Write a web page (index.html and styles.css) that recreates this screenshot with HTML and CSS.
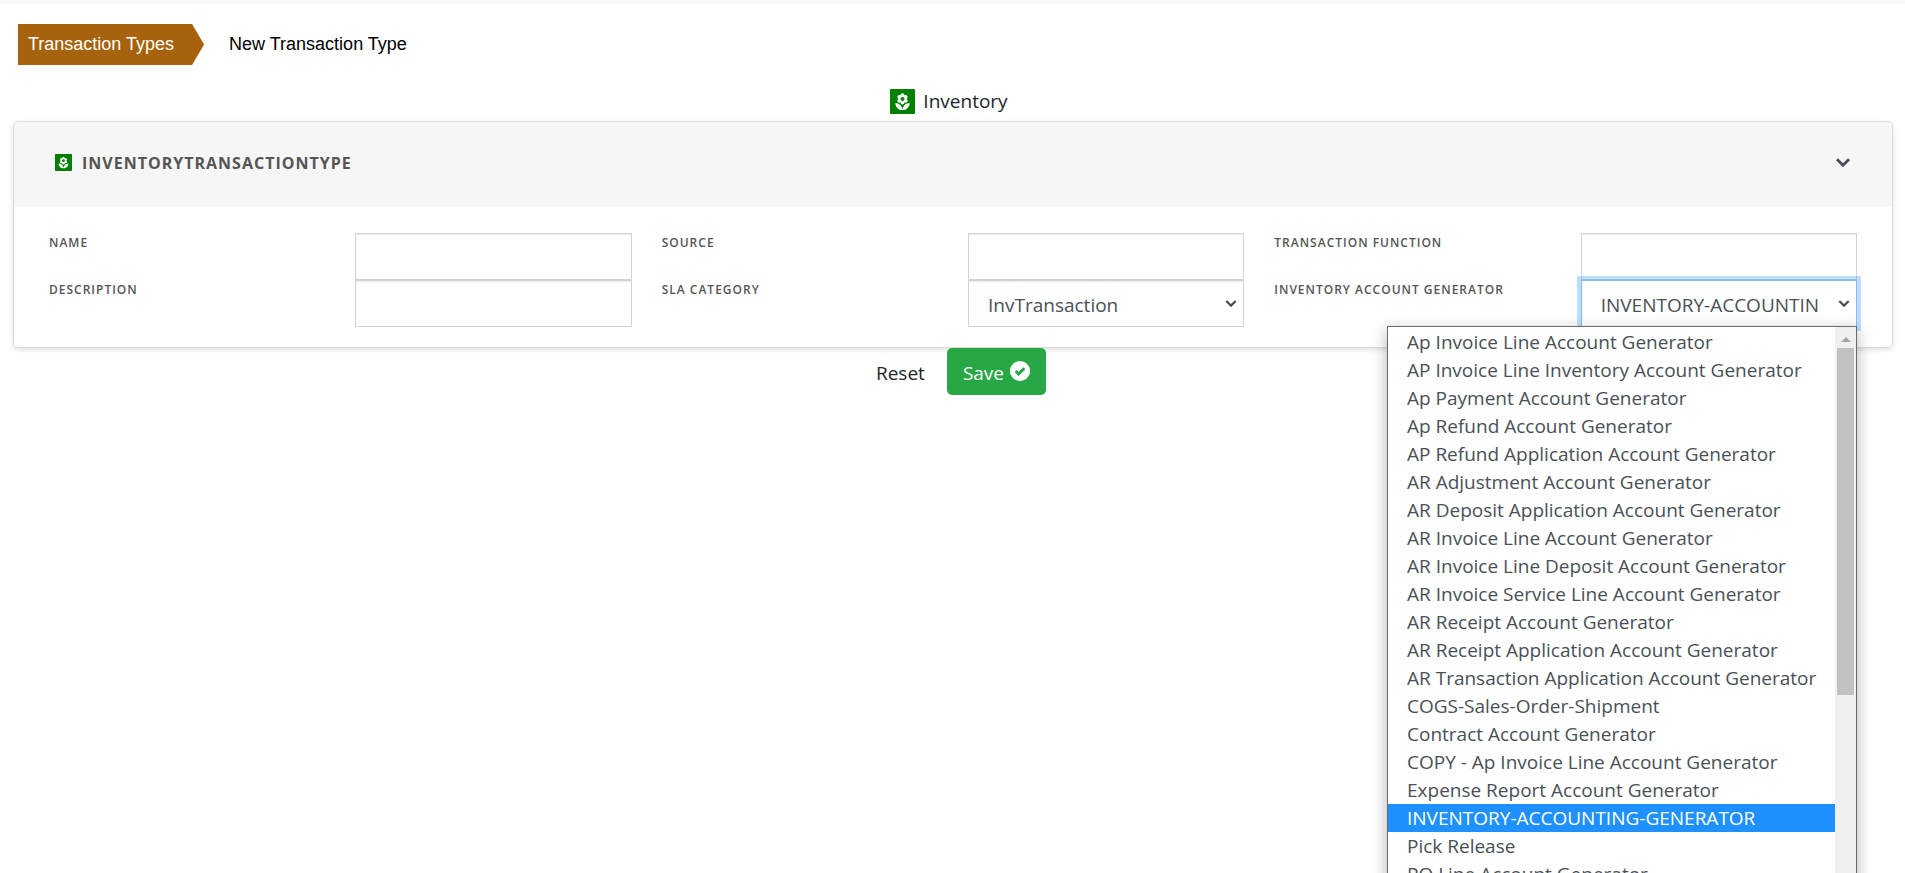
FILE: index.html
```
<!DOCTYPE html>
<html lang="en">
<head>
<meta charset="utf-8">
<meta name="viewport" content="width=device-width, initial-scale=1">
<title>New Transaction Type</title>
<link rel="stylesheet" href="styles.css">
</head>
<body>
<svg class="sprite" aria-hidden="true">
  <symbol id="florist" viewBox="0 0 25 25">
    <rect width="25" height="25" rx="1" fill="#008000"/>
    <path transform="translate(2.9 3.5) scale(.8)" fill="#fff" fill-rule="evenodd" d="M12 22c4.97 0 9-4.03 9-9-4.97 0-9 4.03-9 9zM5.6 10.25c0 1.38 1.12 2.5 2.5 2.5.53 0 1.01-.16 1.42-.44l-.02.19c0 1.38 1.12 2.5 2.5 2.5s2.5-1.12 2.5-2.5l-.02-.19c.4.28.89.44 1.42.44 1.38 0 2.5-1.12 2.5-2.5 0-1-.59-1.85-1.43-2.25.84-.4 1.43-1.25 1.43-2.25 0-1.38-1.12-2.5-2.5-2.5-.53 0-1.01.16-1.42.44l.02-.19C14.5 2.12 13.38 1 12 1S9.5 2.12 9.5 3.5l.02.19c-.4-.28-.89-.44-1.42-.44-1.38 0-2.5 1.12-2.5 2.5 0 1 .59 1.85 1.43 2.25-.84.4-1.43 1.25-1.43 2.25zM12 5.5c1.38 0 2.5 1.12 2.5 2.5s-1.12 2.5-2.5 2.5S9.5 9.38 9.5 8s1.12-2.5 2.5-2.5zM3 13c0 4.97 4.03 9 9 9 0-4.97-4.03-9-9-9z"/>
  </symbol>
  <symbol id="chevron" viewBox="0 0 14 10">
    <path d="M1.5 2 7 7.5 12.500 2" fill="none" stroke="currentColor" stroke-width="2.600"/>
  </symbol>
</svg>
<main class="page">
  <nav class="breadcrumb" aria-label="Breadcrumb">
    <a class="crumb crumb-parent" href="#">Transaction Types</a>
    <span class="crumb" aria-current="page">New Transaction Type</span>
  </nav>
  <h1 class="title"><svg class="title-icon" aria-hidden="true"><use href="#florist"/></svg>Inventory</h1>
  <form>
    <section class="card">
      <header class="card-header">
        <h2 class="card-title"><svg class="card-icon" aria-hidden="true"><use href="#florist"/></svg>InventoryTransactionType</h2>
        <button class="collapse" type="button" aria-label="Collapse"><svg class="collapse-icon" aria-hidden="true"><use href="#chevron"/></svg></button>
      </header>
      <div class="fields">
        <label class="label" for="name">Name</label>
        <div class="field"><input class="control" id="name" type="text"></div>
        <label class="label" for="source">Source</label>
        <div class="field"><input class="control" id="source" type="text"></div>
        <label class="label" for="function">Transaction Function</label>
        <div class="field"><input class="control" id="function" type="text"></div>
        <label class="label" for="description">Description</label>
        <div class="field"><input class="control" id="description" type="text"></div>
        <label class="label" for="sla">SLA Category</label>
        <div class="field">
          <select class="control" id="sla"><option>InvTransaction</option></select>
          <svg class="arrow" aria-hidden="true"><use href="#chevron"/></svg>
        </div>
        <label class="label" for="generator">Inventory Account Generator</label>
        <div class="field">
          <select class="control is-open" id="generator"><option>INVENTORY-ACCOUNTING-GENERATOR</option></select>
          <svg class="arrow" aria-hidden="true"><use href="#chevron"/></svg>
          <div class="menu">
            <ul class="options" role="listbox" aria-label="Inventory Account Generator">
              <li class="option" role="option">Ap Invoice Line Account Generator</li>
              <li class="option" role="option">AP Invoice Line Inventory Account Generator</li>
              <li class="option" role="option">Ap Payment Account Generator</li>
              <li class="option" role="option">Ap Refund Account Generator</li>
              <li class="option" role="option">AP Refund Application Account Generator</li>
              <li class="option" role="option">AR Adjustment Account Generator</li>
              <li class="option" role="option">AR Deposit Application Account Generator</li>
              <li class="option" role="option">AR Invoice Line Account Generator</li>
              <li class="option" role="option">AR Invoice Line Deposit Account Generator</li>
              <li class="option" role="option">AR Invoice Service Line Account Generator</li>
              <li class="option" role="option">AR Receipt Account Generator</li>
              <li class="option" role="option">AR Receipt Application Account Generator</li>
              <li class="option" role="option">AR Transaction Application Account Generator</li>
              <li class="option" role="option">COGS-Sales-Order-Shipment</li>
              <li class="option" role="option">Contract Account Generator</li>
              <li class="option" role="option">COPY - Ap Invoice Line Account Generator</li>
              <li class="option" role="option">Expense Report Account Generator</li>
              <li class="option is-selected" role="option" aria-selected="true">INVENTORY-ACCOUNTING-GENERATOR</li>
              <li class="option" role="option">Pick Release</li>
              <li class="option" role="option">PO Line Account Generator</li>
            </ul>
            <div class="scrollbar" aria-hidden="true">
              <svg class="scroll-up" viewBox="0 0 10 5"><path d="M0 5 5 0l5 5z" fill="#a3a3a3"/></svg>
              <div class="thumb"></div>
            </div>
          </div>
        </div>
      </div>
    </section>
    <div class="actions">
      <button class="btn" type="reset">Reset</button>
      <button class="btn btn-save" type="submit">Save
        <svg class="check" viewBox="0 0 20 20" aria-hidden="true"><path fill="#fff" d="m10 0 3 .6 3.100 1.300 2.100 2.700L19.700 7 20 10l-.3 3-1.500 2.500-2.100 2.600-3.100 1.300-3 .6-3-.6-3.100-1.300-2.100-2.600L.3 13 0 10l.3-3 1.500-2.400 2.100-2.700L7 .6z"/><path d="m5.600 10 3 3 5.800-5.800" fill="none" stroke="#28a745" stroke-width="3"/></svg>
      </button>
    </div>
  </form>
</main>
</body>
</html>
```
FILE: styles.css
```
* { box-sizing: border-box; }

body {
  margin: 0;
  background: #fff;
  color: #212529;
  font: 19px/30px "Segoe UI", "Open Sans", "Noto Sans", sans-serif;
}

.sprite { position: absolute; width: 0; height: 0; }

.page {
  position: relative;
  height: 100vh;
  overflow: hidden;
  border-top: 4px solid #f8f9fa;
  padding: 20px 12px 0 13px;
}

.breadcrumb {
  display: flex;
  gap: 25px;
  margin-left: 5px;
  font: 18px/41px Arial, "Liberation Sans", sans-serif;
  color: #000;
}

.crumb-parent {
  padding: 0 30px 0 10px;
  background: #a6620c;
  color: #fff;
  text-decoration: none;
  clip-path: polygon(0 0, calc(100% - 12px) 0, 100% 50%, calc(100% - 12px) 100%, 0 100%);
}

.title {
  display: flex;
  justify-content: center;
  align-items: center;
  gap: 8px;
  margin: 21px 8px 5px 0;
  font-size: 19px;
  font-weight: 400;
}

.title-icon { width: 25px; height: 25px; }

.card {
  border: 1px solid #dcdcdc;
  border-radius: 5px;
  box-shadow: 0 2px 5px rgba(0, 0, 0, .12);
  color: #555;
}

.card-header {
  display: flex;
  justify-content: space-between;
  align-items: center;
  height: 85px;
  padding: 0 41px 4px;
  border-radius: 4px 4px 0 0;
  background: #f6f6f6;
}

.card-title {
  display: flex;
  align-items: center;
  gap: 10px;
  margin: 0;
  font-size: 16px;
  font-weight: 700;
  letter-spacing: 1px;
  text-transform: uppercase;
}

.card-icon { width: 17px; height: 17px; }

.collapse {
  display: flex;
  padding: 0;
  border: 0;
  background: none;
  color: #495057;
}

.collapse-icon { width: 16px; height: 11px; }

.fields {
  display: grid;
  grid-template-columns: repeat(6, minmax(0, 1fr));
  padding: 26px 20px 20px;
}

.label {
  padding: 1px 15px 0;
  font-size: 12px;
  font-weight: 600;
  line-height: 18px;
  letter-spacing: 1px;
  text-transform: uppercase;
  white-space: nowrap;
}

.field { position: relative; padding: 0 15px; }

.control {
  display: block;
  width: 100%;
  height: 47px;
  padding: 2px 36px 0 19px;
  border: 1px solid #ced4da;
  border-radius: 0;
  outline: 0;
  background: #fff;
  box-shadow: inset 0 1px 1px rgba(0, 0, 0, .08);
  color: #495057;
  font: inherit;
  appearance: none;
}

.control.is-open {
  position: relative;
  border-color: #80bdff;
  box-shadow: 0 0 0 4px rgba(0, 123, 255, .25);
}

.arrow {
  position: absolute;
  top: 19px;
  right: 22px;
  width: 12px;
  height: 9px;
  color: #495057;
}

.menu {
  position: absolute;
  z-index: 1;
  top: 46px;
  right: 15px;
  display: flex;
  width: 470px;
  border: 1px solid #6b6b6b;
  background: #fff;
  box-shadow: 0 4px 14px rgba(0, 0, 0, .3);
}

.options {
  flex: 1;
  margin: 0;
  padding: 1px 0 0;
  list-style: none;
  color: #495057;
}

.option {
  padding-left: 19px;
  line-height: 28px;
  white-space: nowrap;
}

.option.is-selected { background: #1e90ff; color: #fff; }

.scrollbar {
  display: flex;
  flex: none;
  flex-direction: column;
  align-items: center;
  gap: 6px;
  width: 21px;
  padding-top: 10px;
  background: #f0f0f0;
}

.scroll-up { width: 10px; height: 5px; }

.thumb { width: 17px; height: 347px; background: #c1c1c1; }

.actions {
  display: flex;
  justify-content: center;
  gap: 6px;
}

.btn {
  display: flex;
  align-items: center;
  gap: 6px;
  height: 47px;
  padding: 2px 16px 0;
  border: 0;
  border-radius: 5px;
  background: none;
  color: #212529;
  font: inherit;
}

.btn-save { background: #28a745; color: #fff; }

.check { width: 20px; height: 20px; margin-bottom: 4px; }
```
